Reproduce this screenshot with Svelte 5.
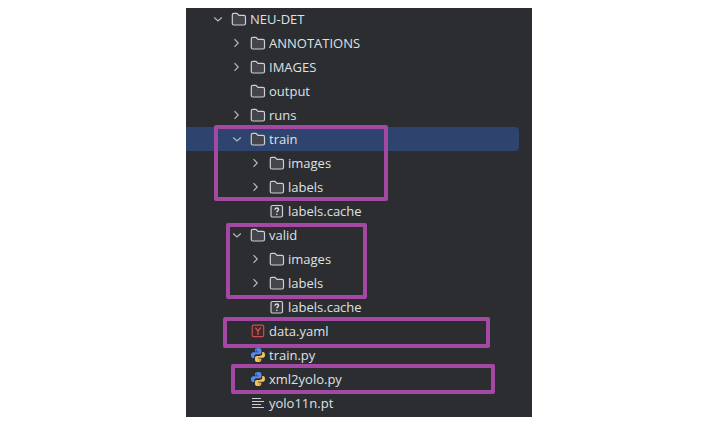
<script>
  const INDENT = 19;

  const rows = [
    { name: "NEU-DET", depth: 0, icon: "folder", open: true },
    { name: "ANNOTATIONS", depth: 1, icon: "folder", open: false },
    { name: "IMAGES", depth: 1, icon: "folder", open: false },
    { name: "output", depth: 1, icon: "folder" },
    { name: "runs", depth: 1, icon: "folder", open: false },
    { name: "train", depth: 1, icon: "folder", open: true },
    { name: "images", depth: 2, icon: "folder", open: false },
    { name: "labels", depth: 2, icon: "folder", open: false },
    { name: "labels.cache", depth: 2, icon: "unknown" },
    { name: "valid", depth: 1, icon: "folder", open: true },
    { name: "images", depth: 2, icon: "folder", open: false },
    { name: "labels", depth: 2, icon: "folder", open: false },
    { name: "labels.cache", depth: 2, icon: "unknown" },
    { name: "data.yaml", depth: 1, icon: "yaml" },
    { name: "train.py", depth: 1, icon: "python" },
    { name: "xml2yolo.py", depth: 1, icon: "python" },
    { name: "yolo11n.pt", depth: 1, icon: "text" },
  ];

  // frames drawn over the tree
  const marks = [
    { x: 28, y: 117, w: 174, h: 76 },
    { x: 40, y: 215, w: 141, h: 76 },
    { x: 37, y: 309, w: 267, h: 31 },
    { x: 45, y: 356, w: 264, h: 30 },
  ];

  let selected = $state(5);
</script>

<main>
  <div class="panel">
    <ul class="tree">
      {#each rows as row, i}
        <li
          class="row"
          class:selected={selected === i}
          style="padding-left: {24 + row.depth * INDENT}px"
        >
          {#if row.open !== undefined}
            <button
              class="toggle"
              aria-label="Toggle {row.name}"
              aria-expanded={row.open}
            >
              <svg viewBox="0 0 16 16">
                {#if row.open}
                  <path d="M4.2 6.5 8 10l3.8-3.5" />
                {:else}
                  <path d="M5.5 4.2 9.2 8l-3.7 3.8" />
                {/if}
              </svg>
            </button>
          {:else}
            <span class="toggle"></span>
          {/if}
          <button class="item" onclick={() => (selected = i)}>
            <svg class="icon" viewBox="0 0 16 16">
              {#if row.icon === "folder"}
                <path
                  d="M1.3 3.8c0-.9.6-1.5 1.500-1.500h3.200l2 2.100h5c.9 0 1.500.6 1.500 1.500v6.600c0 .9-.6 1.500-1.500 1.500H2.800c-.9 0-1.500-.6-1.500-1.500z"
                  fill="#43454a"
                  stroke="#ced0d6"
                  stroke-width="1.2"
                />
              {:else if row.icon === "unknown"}
                <rect
                  x="2"
                  y="2.5"
                  width="11.5"
                  height="11.5"
                  rx="1.5"
                  fill="#3b3d41"
                  stroke="#ced0d6"
                  stroke-width="1.2"
                />
                <path
                  d="M6 6.700c0-1.100.7-1.700 1.800-1.700s1.800.6 1.800 1.600c0 1.300-1.800 1.300-1.800 2.600"
                  fill="none"
                  stroke="#dfe1e5"
                  stroke-width="1.3"
                />
                <circle cx="7.8" cy="11.2" r="0.8" fill="#dfe1e5" />
              {:else if row.icon === "yaml"}
                <rect
                  x="2.2"
                  y="2.2"
                  width="11.5"
                  height="11.5"
                  rx="1.5"
                  fill="#402929"
                  stroke="#c94f51"
                  stroke-width="1.2"
                />
                <path
                  d="M5.4 4.600 8 8.200v3.500M10.600 4.600 8 8.200"
                  fill="none"
                  stroke="#d65557"
                  stroke-width="1.3"
                />
              {:else if row.icon === "python"}
                <path
                  d="M8.200 1C6 1 5 1.800 5 3.100v1.500h3.400v.7H3.300C1.900 5.300 1 6.400 1 8.200s.9 2.900 2 2.900h1.300V9.400c0-1.300 1-2.200 2.300-2.200h2.900c1.100 0 1.900-.9 1.900-2V3.100C11.400 1.800 10.400 1 8.200 1z"
                  fill="#548af7"
                />
                <path
                  d="M8 15c2.200 0 3.300-.8 3.300-2.100v-1.500H7.900v-.7H13c1.300 0 2-1.100 2-2.900s-.8-2.900-1.900-2.900h-.9v1.700c0 1.300-1 2.300-2.300 2.300H7c-1.200 0-2 .9-2 2v2C5 14.200 5.900 15 8 15z"
                  fill="#f2c55c"
                />
                <circle cx="6.6" cy="3" r="0.5" fill="#2b2d30" />
                <circle cx="9.7" cy="13" r="0.5" fill="#2b2d30" />
              {:else}
                <path
                  d="M2 3.500h9M2 6.500h12M2 9.500h9M2 12.500h12"
                  fill="none"
                  stroke="#ced0d6"
                />
              {/if}
            </svg>
            <span>{row.name}</span>
          </button>
        </li>
      {/each}
    </ul>
    {#each marks as m}
      <div
        class="mark"
        style="left: {m.x}px; top: {m.y}px; width: {m.w}px; height: {m.h}px"
      ></div>
    {/each}
  </div>
</main>

<style>
  :global(body) {
    margin: 0;
    background: #fff;
  }
  main {
    padding: 8px 178px 20px 186px;
  }
  .panel {
    position: relative;
    overflow: hidden;
    padding-bottom: 2px;
    background: #2b2d30;
    color: #dfe1e5;
    font-family: "Open Sans", "Noto Sans", sans-serif;
    font-size: 13px;
  }
  .tree {
    list-style: none;
    margin: -1px 13px 0 0;
    padding: 0;
  }
  .row {
    display: flex;
    align-items: center;
    gap: 5px;
    height: 24px;
    border-radius: 0 4px 4px 0;
  }
  .selected {
    background: #2e436e;
  }
  button {
    border: none;
    padding: 0;
    background: none;
    color: inherit;
    font: inherit;
  }
  .toggle {
    width: 16px;
    height: 16px;
    flex: none;
  }
  .toggle svg {
    display: block;
    fill: none;
    stroke: #b4b8bf;
    stroke-width: 1.2;
  }
  .item {
    display: flex;
    flex: 1;
    align-items: center;
    gap: 3px;
    line-height: 24px;
    white-space: nowrap;
  }
  .icon {
    width: 16px;
    height: 16px;
    flex: none;
  }
  .mark {
    position: absolute;
    box-sizing: border-box;
    border: 4px solid #a349a4;
    border-radius: 2px;
    pointer-events: none;
  }
</style>
